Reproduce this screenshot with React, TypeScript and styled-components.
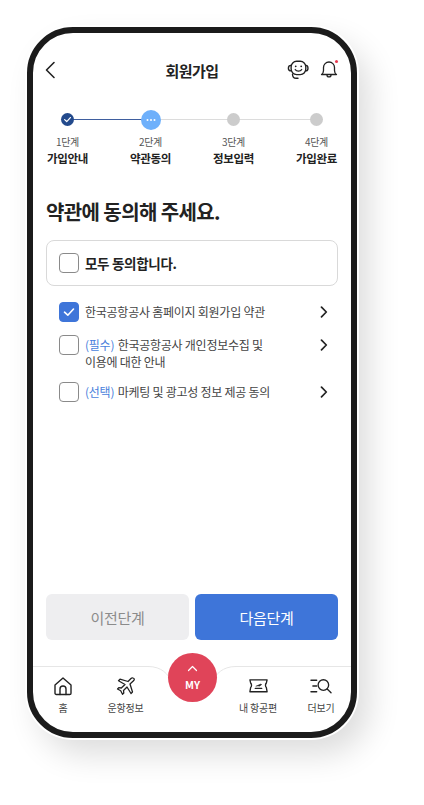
import React from "react";
import styled, { createGlobalStyle } from "styled-components";

const Global = createGlobalStyle`
  html, body { margin: 0; padding: 0; background: #fff; }
  body { font-family: "Noto Sans CJK KR", "Noto Sans", sans-serif; color: #1c1c1c; }
  * { box-sizing: border-box; }
`;

const Page = styled.div`
  width: 424px;
  height: 805px;
  padding: 27px 0 0 27px;
  overflow: hidden;
`;

const Phone = styled.div`
  width: 330px;
  height: 711px;
  border: 6px solid #1b1b1b;
  border-radius: 46px;
  background: #fff;
  box-shadow: 0 0 0 2px #fff, 12px 16px 32px rgba(0, 0, 0, 0.14);
  display: flex;
  flex-direction: column;
  overflow: hidden;
`;

const Header = styled.header`
  height: 62px;
  padding: 12px 12px 0 12px;
  display: flex;
  align-items: center;
  justify-content: space-between;
`;

const Title = styled.h1`
  margin: 0;
  font-size: 15px;
  font-weight: 700;
  letter-spacing: -0.5px;
  color: #222;
  flex: 1;
  text-align: center;
  padding-left: 41px;
`;

const HeaderIcons = styled.div`
  display: flex;
  gap: 11px;
  align-items: center;
`;

const Content = styled.main`
  flex: 1;
  padding: 0 13px;
  display: flex;
  flex-direction: column;
`;

const Stepper = styled.ol`
  position: relative;
  list-style: none;
  margin: 16px 0 0;
  padding: 0;
  display: flex;
  justify-content: space-between;
`;

const Track = styled.div`
  position: absolute;
  top: 8px;
  left: 21px;
  right: 21px;
  height: 1px;
  background: #dcdcdc;
`;

const TrackDone = styled.div`
  position: absolute;
  top: 8px;
  left: 21px;
  width: 84px;
  height: 1px;
  background: #3f5e9f;
`;

const Step = styled.li`
  position: relative;
  width: 43px;
  display: flex;
  flex-direction: column;
  align-items: center;
`;

const Dot = styled.span<{ $state: "done" | "now" | "todo" }>`
  height: 17px;
  display: flex;
  align-items: center;
  justify-content: center;
  & > span {
    display: flex;
    align-items: center;
    justify-content: center;
    border-radius: 50%;
    width: ${(p) => (p.$state === "now" ? 20 : 13)}px;
    height: ${(p) => (p.$state === "now" ? 20 : 13)}px;
    background: ${(p) => (p.$state === "now" ? "#6eb0fb" : p.$state === "done" ? "#234a8c" : "#cccccc")};
  }
`;

const StepNum = styled.span`
  margin-top: 6px;
  font-size: 10px;
  line-height: 15px;
  color: #555;
  letter-spacing: -0.3px;
`;

const StepName = styled.span`
  margin-top: 1px;
  font-size: 11.5px;
  line-height: 16px;
  font-weight: 700;
  color: #222;
  letter-spacing: -0.3px;
  white-space: nowrap;
`;

const Heading = styled.h2`
  margin: 33px 0 0;
  font-size: 20px;
  line-height: 26px;
  font-weight: 700;
  color: #222;
  letter-spacing: -0.6px;
`;

const AllBox = styled.label`
  margin-top: 15px;
  height: 46px;
  border: 1px solid #d9d9d9;
  border-radius: 8px;
  padding: 0 12px 1px;
  display: flex;
  align-items: center;
  gap: 6px;
  font-size: 13.5px;
  font-weight: 700;
  letter-spacing: -0.3px;
  color: #222;
`;

const Box = styled.span<{ $on?: boolean }>`
  flex: none;
  width: 20px;
  height: 20px;
  border-radius: 4px;
  border: 1px solid ${(p) => (p.$on ? "#3e75d9" : "#8a8a8a")};
  background: ${(p) => (p.$on ? "#3e75d9" : "#fff")};
  display: flex;
  align-items: center;
  justify-content: center;
`;

const Terms = styled.ul`
  list-style: none;
  margin: 16px 0 0;
  padding: 0 10px 0 13px;
  display: flex;
  flex-direction: column;
  gap: 13px;
`;

const Term = styled.li`
  display: flex;
  align-items: flex-start;
  gap: 6px;
`;

const TermText = styled.span`
  flex: 1;
  font-size: 12px;
  line-height: 17px;
  margin: 1px 0 -1px;
  color: #444;
  letter-spacing: -0.25px;
`;

const Tag = styled.span`
  color: #4a7fdc;
  margin-right: 1px;
`;

const Arrow = styled.span`
  flex: none;
  height: 20px;
  display: flex;
  align-items: center;
`;

const Buttons = styled.div`
  margin-top: auto;
  margin-bottom: 26px;
  display: flex;
  gap: 6px;
`;

const Btn = styled.button<{ $primary?: boolean }>`
  flex: 1;
  height: 46px;
  border: 0;
  border-radius: 6px;
  font: inherit;
  font-size: 15px;
  font-weight: 400;
  letter-spacing: -0.3px;
  background: ${(p) => (p.$primary ? "#3e75d9" : "#eeeef0")};
  color: ${(p) => (p.$primary ? "#fff" : "#8b8b8b")};
`;

const Nav = styled.nav`
  position: relative;
  height: 66px;
  display: flex;
  padding: 10px 0 0;
`;

const NavCurve = styled.svg`
  position: absolute;
  left: 0;
  top: 0;
`;

const NavItem = styled.div<{ $w: number }>`
  position: relative;
  width: ${(p) => p.$w}px;
  display: flex;
  flex-direction: column;
  align-items: center;
  font-size: 10px;
  line-height: 14px;
  color: #444;
  letter-spacing: -0.2px;
  white-space: nowrap;
  & > svg { margin-bottom: 5px; }
`;

const NavGap = styled.div`
  flex: 1;
`;

const MyButton = styled.button`
  position: absolute;
  left: 135px;
  top: -13px;
  width: 49px;
  height: 49px;
  border-radius: 50%;
  border: 0;
  padding: 12px 0 0;
  background: #e04459;
  color: #fff;
  font: inherit;
  font-size: 10.5px;
  font-weight: 700;
  line-height: 13px;
  display: flex;
  flex-direction: column;
  align-items: center;
  gap: 6px;
`;

const stroke = { fill: "none", stroke: "#222", strokeLinecap: "round" as const, strokeLinejoin: "round" as const };

const Check = ({ size = 14, w = 1.6 }: { size?: number; w?: number }) => (
  <svg width={size} height={size} viewBox="0 0 14 14">
    <path d="M2.5 7.2 5.8 10.2 11.5 4" fill="none" stroke="#fff" strokeWidth={w} strokeLinecap="round" strokeLinejoin="round" />
  </svg>
);

const ChevronRight = () => (
  <svg width="8" height="12" viewBox="0 0 8 12">
    <path d="M1.5 1.2 6.3 6 1.5 10.8" {...stroke} strokeWidth="1.7" />
  </svg>
);

const terms = [
  { on: true, text: "한국공항공사 홈페이지 회원가입 약관" },
  { tag: "(필수)", text: " 한국공항공사 개인정보수집 및", line: "이용에 대한 안내" },
  { tag: "(선택)", text: " 마케팅 및 광고성 정보 제공 동의" },
];

const steps = [
  { n: "1단계", name: "가입안내", state: "done" as const },
  { n: "2단계", name: "약관동의", state: "now" as const },
  { n: "3단계", name: "정보입력", state: "todo" as const },
  { n: "4단계", name: "가입완료", state: "todo" as const },
];

export default function App() {
  return (
    <Page>
      <Global />
      <Phone>
        <Header>
          <svg width="11" height="18" viewBox="0 0 11 18">
            <path d="M9 1.500 1.500 9 9 16.500" {...stroke} strokeWidth="1.600" />
          </svg>
          <Title>회원가입</Title>
          <HeaderIcons>
            <svg width="22" height="22" viewBox="0 0 24 24">
              <rect x="4.500" y="2.500" width="16" height="14.500" rx="6" {...stroke} strokeWidth="1.500" />
              <path d="M4.500 7C2.500 7 1.500 8.500 1.500 10S2.800 13 4.500 13M20.500 7c1.600 0 2.400 1.200 2.400 3s-.8 3-2.400 3" {...stroke} strokeWidth="1.500" />
              <path d="M9 11.500c1.500 2.200 5.500 2.200 7 0" {...stroke} strokeWidth="1.400" />
              <circle cx="9.500" cy="8" r="1" fill="#222" />
              <circle cx="15.500" cy="8" r="1" fill="#222" />
              <path d="M6 16.500c0 2.500 1.500 4.500 4 4.500h2" {...stroke} strokeWidth="1.500" />
            </svg>
            <svg width="19" height="22" viewBox="0 0 19 22">
              <path d="M1.500 15.500c1.500-1 2-2 2-4V8.500a5.500 5.500 0 0 1 11 0v3c0 2 .5 3 2 4Z" {...stroke} strokeWidth="1.300" />
              <path d="M7 16c0 2.600 4 2.600 4 0" {...stroke} strokeWidth="1.300" />
              <circle cx="16.500" cy="2.500" r="1.500" fill="#e8394f" />
            </svg>
          </HeaderIcons>
        </Header>
        <Content>
          <Stepper>
            <Track />
            <TrackDone />
            {steps.map((s) => (
              <Step key={s.n}>
                <Dot $state={s.state}>
                  <span>
                    {s.state === "done" && <Check size={9} w={1.9} />}
                    {s.state === "now" && (
                      <svg width="10" height="4" viewBox="0 0 10 4">
                        <circle cx="1.500" cy="2" r="1" fill="#fff" />
                        <circle cx="5" cy="2" r="1" fill="#fff" />
                        <circle cx="8.500" cy="2" r="1" fill="#fff" />
                      </svg>
                    )}
                  </span>
                </Dot>
                <StepNum>{s.n}</StepNum>
                <StepName>{s.name}</StepName>
              </Step>
            ))}
          </Stepper>
          <Heading>약관에 동의해 주세요.</Heading>
          <AllBox>
            <Box />
            모두 동의합니다.
          </AllBox>
          <Terms>
            {terms.map((t) => (
              <Term key={t.text}>
                <Box $on={t.on}>{t.on && <Check />}</Box>
                <TermText>
                  {t.tag && <Tag>{t.tag}</Tag>}
                  {t.text}
                  {t.line && (
                    <>
                      <br />
                      {t.line}
                    </>
                  )}
                </TermText>
                <Arrow>
                  <ChevronRight />
                </Arrow>
              </Term>
            ))}
          </Terms>
          <Buttons>
            <Btn>이전단계</Btn>
            <Btn $primary>다음단계</Btn>
          </Buttons>
        </Content>
        <Nav>
          <NavCurve width="318" height="20" viewBox="0 0 318 20">
            <path d="M0 .5H115c14 0 20 8 24 15M318 .5H203c-14 0-20 8-24 15" fill="none" stroke="#e6e6e6" strokeWidth="1" />
          </NavCurve>
          <NavItem $w={60}>
            <svg width="20" height="20" viewBox="0 0 20 20">
              <path d="M2 9 10 2l8 7v8.200a1.300 1.300 0 0 1-1.300 1.300H3.300a1.300 1.300 0 0 1-1.300-1.300Z" {...stroke} strokeWidth="1.400" />
              <path d="M7 18.500V13a3 3 0 0 1 6 0v5.500" {...stroke} strokeWidth="1.400" />
            </svg>
            홈
          </NavItem>
          <NavItem $w={65}>
            <svg width="20" height="20" viewBox="0 0 20 20">
              <path d="M17 2c1.500.500 1.500 1.500.800 2.500L14 8l2.500 8-1.500 1.500L11 11l-3.500 3.500.300 2.500-1.300 1.300-1.800-3.500L1.500 13l1.300-1.300 2.500.3L9 8.500 2.500 4.700 4 3.200 12 5.500l3-3c.6-.6 1.300-.8 2-.5Z" {...stroke} strokeWidth="1.300" />
            </svg>
            운항정보
          </NavItem>
          <NavGap />
          <NavItem $w={66}>
            <svg width="21" height="20" viewBox="0 0 22 20">
              <path d="M2 3.500h18l-.8 3.500c-1.200 1-1.200 3.500 0 4.500l.8 4.500H2l.8-4.500c1.200-1 1.200-3.500 0-4.500Z" {...stroke} strokeWidth="1.400" />
              <path d="M7.500 12.500h7" {...stroke} strokeWidth="1.100" />
              <path d="m8 10.300 5.500-2.300.8.500-2.300 1.800" fill="#222" stroke="#222" strokeWidth=".6" strokeLinejoin="round" />
            </svg>
            내 항공편
          </NavItem>
          <NavItem $w={60}>
            <svg width="22" height="20" viewBox="0 0 23 20">
              <path d="M1 4h6M3 10h4M1 16h6" {...stroke} strokeWidth="1.400" />
              <circle cx="14" cy="9" r="5.500" {...stroke} strokeWidth="1.400" />
              <path d="m18 13.200 4 3.800" {...stroke} strokeWidth="1.400" />
            </svg>
            더보기
          </NavItem>
          <MyButton>
            <svg width="11" height="7" viewBox="0 0 11 7">
              <path d="M1.500 5.500 5.500 1.500l4 4" fill="none" stroke="#fff" strokeWidth="1.200" strokeLinecap="round" strokeLinejoin="round" />
            </svg>
            MY
          </MyButton>
        </Nav>
      </Phone>
    </Page>
  );
}
